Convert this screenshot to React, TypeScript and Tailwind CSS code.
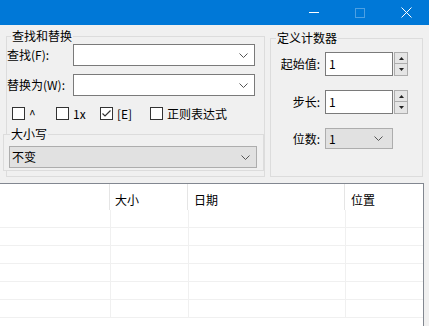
import React from "react";

const Chevron = ({ className = "" }: { className?: string }) => (
  <svg width="9" height="5" viewBox="0 0 9 5" className={className}>
    <path d="M0.5 0.5 L4.5 4.5 L8.5 0.5" fill="none" stroke="#555" strokeWidth="1" />
  </svg>
);

const Check = ({ checked = false, label }: { checked?: boolean; label: string }) => (
  <div className="flex items-center">
    <div className="w-[13px] h-[13px] border border-[#333333] bg-white flex items-center justify-center">
      {checked && (
        <svg width="11" height="11" viewBox="0 0 11 11">
          <path d="M1.5 5.5 L4 8 L9.5 2.5" fill="none" stroke="#333" strokeWidth="1.2" />
        </svg>
      )}
    </div>
    <span className="ml-[4px] text-[12px] leading-[16px] text-black">{label}</span>
  </div>
);

const Spin = () => (
  <div className="ml-[1px] flex flex-col w-[14px] h-[24px]">
    <div className="h-[12px] border border-[#adadad] bg-[#e5e5e5] flex items-center justify-center">
      <svg width="5" height="3" viewBox="0 0 5 3"><path d="M2.5 0 L5 3 L0 3 Z" fill="#222" /></svg>
    </div>
    <div className="h-[12px] border border-t-0 border-[#adadad] bg-[#e5e5e5] flex items-center justify-center">
      <svg width="5" height="3" viewBox="0 0 5 3"><path d="M0 0 L5 0 L2.5 3 Z" fill="#222" /></svg>
    </div>
  </div>
);

export default function App() {
  const rows = [0, 1, 2, 3, 4, 5];
  return (
    <div
      className="w-[429px] h-[326px] overflow-hidden bg-[#f0f0f0] text-black text-[12px] leading-[16px]"
      style={{ fontFamily: '"Noto Sans CJK SC", "Noto Sans", sans-serif' }}
    >
      {/* Title bar */}
      <div className="h-[25px] bg-[#0078d7] flex justify-end">
        <div className="w-[46px] h-[25px] flex items-center justify-center">
          <div className="w-[10px] h-[1px] bg-white" />
        </div>
        <div className="w-[46px] h-[25px] flex items-center justify-center">
          <div className="w-[10px] h-[10px] border border-white opacity-30" />
        </div>
        <div className="w-[46px] h-[25px] flex items-center justify-center">
          <svg width="11" height="11" viewBox="0 0 11 11">
            <path d="M0.5 0.5 L10.5 10.5 M10.5 0.5 L0.5 10.5" stroke="white" strokeWidth="1" />
          </svg>
        </div>
      </div>

      <div className="flex items-start">
        {/* Left group */}
        <fieldset className="ml-[6px] mt-[3px] w-[259px] border border-[#dcdcdc] px-0 pb-0">
          <legend className="ml-[4px] px-[1px] text-[12px] leading-[16px]">查找和替换</legend>
          <div className="flex items-center h-[22px]">
            <span className="w-[66px]">查找(F):</span>
            <div className="w-[182px] h-[22px] bg-white border border-[#7a7a7a] flex items-center justify-end pr-[6px]">
              <Chevron />
            </div>
          </div>
          <div className="flex items-center h-[22px] mt-[8px]">
            <span className="w-[66px]">替换为(W):</span>
            <div className="w-[182px] h-[22px] bg-white border border-[#7a7a7a] flex items-center justify-end pr-[6px]">
              <Chevron />
            </div>
          </div>
          <div className="flex items-center h-[13px] mt-[11px] pl-[5px]">
            <div className="w-[44px]"><Check label="^" /></div>
            <div className="w-[44px]"><Check label="1x" /></div>
            <div className="w-[50px]"><Check checked label="[E]" /></div>
            <div><Check label="正则表达式" /></div>
          </div>
          <fieldset className="ml-[-4px] mt-[6px] mb-[5px] w-[261px] border border-[#dcdcdc] px-0 pt-0 pb-[2px] bg-[#f0f0f0]">
            <legend className="ml-[6px] px-[1px] text-[12px] leading-[16px]">大小写</legend>
            <div className="ml-[5px] mt-[4px] w-[248px] h-[22px] bg-[#e1e1e1] border border-[#adadad] flex items-center justify-between pl-[2px] pr-[6px]">
              <span>不变</span>
              <Chevron />
            </div>
          </fieldset>
        </fieldset>

        {/* Right group */}
        <fieldset className="ml-[5px] mt-[5px] w-[153px] h-[147px] border border-[#dcdcdc] px-0 pb-0">
          <legend className="ml-[5px] px-[1px] text-[12px] leading-[16px]">定义计数器</legend>
          <div className="flex items-center mt-[6px]">
            <span className="w-[50px] text-right pr-[1px]">起始值:</span>
            <div className="ml-[4px] w-[68px] h-[24px] bg-white border border-[#7a7a7a] flex items-center pl-[3px]">1</div>
            <Spin />
          </div>
          <div className="flex items-center mt-[14px]">
            <span className="w-[50px] text-right pr-[1px]">步长:</span>
            <div className="ml-[4px] w-[68px] h-[24px] bg-white border border-[#7a7a7a] flex items-center pl-[3px]">1</div>
            <Spin />
          </div>
          <div className="flex items-center mt-[14px]">
            <span className="w-[50px] text-right pr-[1px]">位数:</span>
            <div className="ml-[4px] w-[68px] h-[21px] bg-[#e1e1e1] border border-[#adadad] flex items-center justify-between pl-[3px] pr-[9px]">
              <span>1</span>
              <Chevron />
            </div>
          </div>
        </fieldset>
      </div>

      {/* List view */}
      <div className="mt-[6px] w-[424px] h-[200px] bg-white border-t border-r border-[#828790]">
        <div className="flex h-[26px]">
          <div className="w-[110px] h-[26px] border-r border-[#e5e5e5]" />
          <div className="w-[78px] h-[26px] border-r border-[#e5e5e5] pl-[5px] pt-[8px]">大小</div>
          <div className="w-[157px] h-[26px] border-r border-[#e5e5e5] pl-[6px] pt-[8px]">日期</div>
          <div className="flex-1 h-[26px] pl-[6px] pt-[8px]">位置</div>
        </div>
        {rows.map((r) => (
          <div key={r} className="flex h-[18px] border-b border-[#f0f0f0]">
            <div className="w-[111px] border-r border-[#f0f0f0]" />
            <div className="w-[78px] border-r border-[#f0f0f0]" />
            <div className="w-[157px] border-r border-[#f0f0f0]" />
            <div className="flex-1" />
          </div>
        ))}
      </div>
    </div>
  );
}
